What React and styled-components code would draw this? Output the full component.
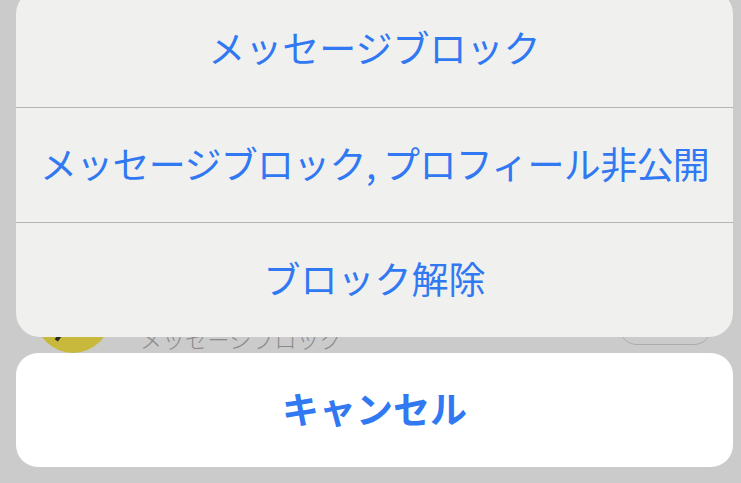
import styled, { createGlobalStyle } from "styled-components";

const GlobalStyle = createGlobalStyle`
  html, body {
    margin: 0;
    padding: 0;
  }
  body {
    font-family: "Noto Sans CJK JP", "Noto Sans", sans-serif;
  }
`;

const Screen = styled.div`
  position: relative;
  width: 741px;
  height: 483px;
  overflow: hidden;
  background: #cbcbcb;
`;

const List = styled.div`
  display: flex;
  flex-direction: column;
  padding-top: 277px;
`;

const ListRow = styled.div`
  display: flex;
  align-items: center;
  height: 76px;
  padding: 0 29px 0 35px;
`;

const Avatar = styled.div`
  position: relative;
  width: 76px;
  height: 76px;
  border-radius: 50%;
  background: ${(p) => p.color};
  flex-shrink: 0;
`;

const Mark = styled.span`
  position: absolute;
  left: 21px;
  top: 58px;
  width: 4px;
  height: 6px;
  background: #2a2a20;
  transform: rotate(35deg);
`;

const RowText = styled.div`
  flex: 1;
  margin-left: 29px;
  padding-top: 46px;
  font-size: 22px;
  font-weight: 300;
  line-height: 1;
  color: #8a8a8a;
  letter-spacing: 0.5px;
  white-space: nowrap;
`;

const Pill = styled.div`
  width: 91px;
  height: 36px;
  margin-top: 22px;
  border: 1px solid #ababab;
  border-radius: 18px;
`;

const Overlay = styled.div`
  position: absolute;
  inset: 0;
  display: flex;
  flex-direction: column;
  justify-content: flex-end;
  gap: 16px;
  padding: 0 8px 16px 16px;
`;

const Sheet = styled.div`
  display: flex;
  flex-direction: column;
  padding-top: 2px;
  border-radius: 24px;
  background: #f0f0ee;
  overflow: hidden;
  flex-shrink: 0;
`;

const Action = styled.button`
  display: flex;
  align-items: center;
  justify-content: center;
  box-sizing: border-box;
  height: ${(p) => p.$height || 115}px;
  padding: 0 0 4px;
  border: none;
  border-top: ${(p) => (p.$first ? "none" : "1px solid #b4b4b2")};
  background: transparent;
  font-family: "Noto Sans CJK JP", "Noto Sans", sans-serif;
  font-size: 37px;
  font-weight: ${(p) => (p.$bold ? 700 : 400)};
  letter-spacing: ${(p) => (p.$tight ? "-0.7px" : "0")};
  line-height: 1;
  color: #3079f2;
  white-space: nowrap;
`;

const Cancel = styled(Action)`
  border-top: none;
  border-radius: 22px;
  background: #ffffff;
  flex-shrink: 0;
`;

const actions = [
  "メッセージブロック",
  "メッセージブロック, プロフィール非公開",
  "ブロック解除",
];

export default function App() {
  return (
    <>
      <GlobalStyle />
      <Screen>
        <List>
          <ListRow>
            <Avatar color="#c8b93c">
              <Mark />
            </Avatar>
            <RowText>メッセージブロック</RowText>
            <Pill />
          </ListRow>
          <ListRow>
            <Avatar color="#bdb58a" />
          </ListRow>
        </List>
        <Overlay>
          <Sheet>
            {actions.map((label, i) => (
              <Action key={label} $first={i === 0} $tight={label.length > 12}>
                {label}
              </Action>
            ))}
          </Sheet>
          <Cancel $height={114} $bold>
            キャンセル
          </Cancel>
        </Overlay>
      </Screen>
    </>
  );
}
